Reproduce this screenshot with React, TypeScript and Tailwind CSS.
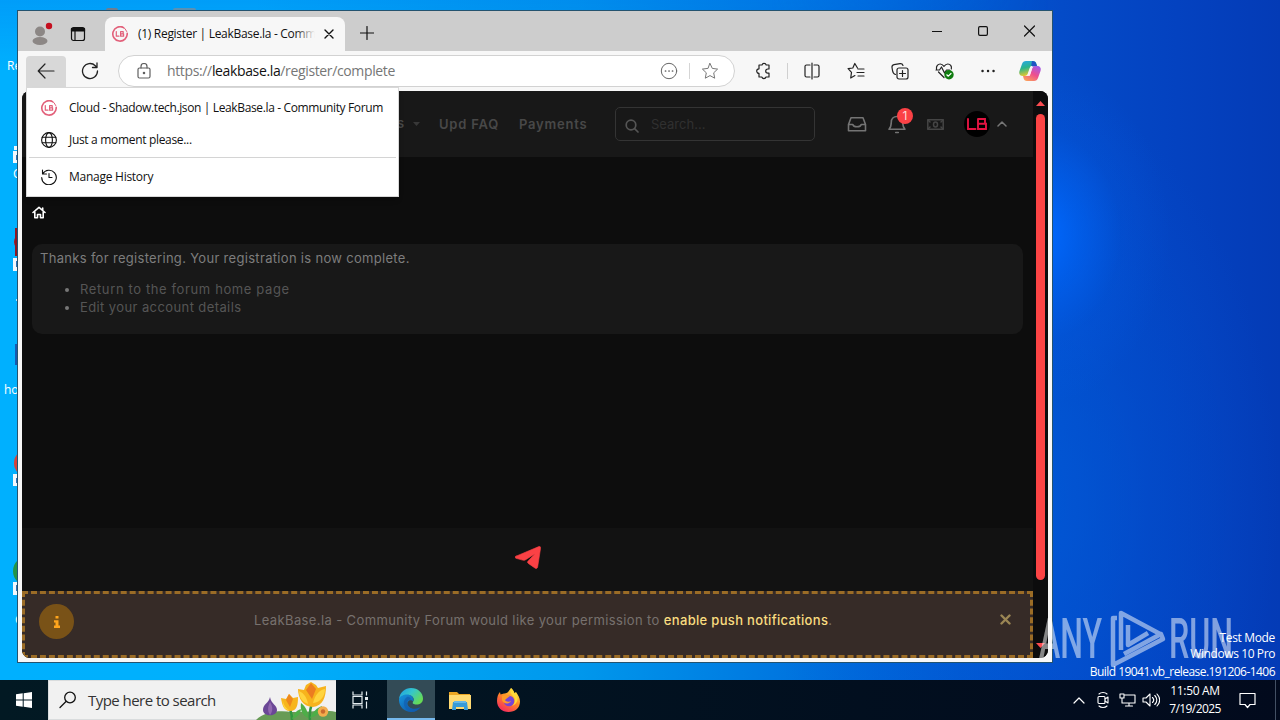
import type { ReactNode } from "react";

type DrawProps = { w: number; h: number; className?: string; sw?: number; children: ReactNode };

function Draw({ w, h, className = "", sw = 1, children }: DrawProps) {
  return (
    <svg
      width={w}
      height={h}
      viewBox={`0 0 ${w} ${h}`}
      fill="none"
      stroke="currentColor"
      strokeWidth={sw}
      strokeLinecap="round"
      strokeLinejoin="round"
      className={`block shrink-0 ${className}`}
    >
      {children}
    </svg>
  );
}

function Favicon() {
  return (
    <Draw w={16} h={16} sw={1.6} className="text-[#e2607a]">
      <path d="M11.5 1.6A7.200 7.200 0 1 0 15.200 7.400" />
      <path d="M10 .8A7.200 7.200 0 0 1 14.800 5.500" strokeWidth={1} />
      <path d="M4.300 5.500v4.700h2.700M8.600 5.700h2.600v2.100H8.600zM8.600 7.800h3v2.400h-3z" strokeWidth={1.200} />
    </Draw>
  );
}

function TitleBar() {
  return (
    <div className="flex h-10 shrink-0 bg-[#cdcdcd] text-[#111]">
      <div className="flex w-[87px] shrink-0 items-center pt-[5px] pl-3">
        <Draw w={24} h={24} className="text-[#8c8785]">
          <circle cx="10" cy="9.500" r="5" fill="currentColor" stroke="none" />
          <ellipse cx="10" cy="19" rx="7.500" ry="4" fill="currentColor" stroke="none" />
          <circle cx="19" cy="4" r="3.200" fill="#c50f1f" stroke="none" />
        </Draw>
        <Draw w={16} h={16} className="ml-4" sw={1.200}>
          <rect x="1.500" y="1.500" width="13" height="13" rx="2" />
          <path d="M1.500 2.500h13v2.500h-13z" fill="currentColor" />
          <path d="M5 5v9" />
        </Draw>
      </div>
      <div className="mt-[6px] flex w-[240px] shrink-0 items-center rounded-t-lg bg-[#f7f7f7] pl-[7px]">
        <Favicon />
        <div className="relative ml-[10px] w-[177px] overflow-hidden whitespace-nowrap text-[12px] leading-[18px] tracking-[-0.300px]">
          (1) Register | LeakBase.la - Commu
          <div className="absolute inset-y-0 right-0 w-5 bg-linear-to-r from-transparent to-[#f7f7f7]" />
        </div>
        <Draw w={10} h={10} className="ml-[9px]" sw={1.400}>
          <path d="M1 1l8 8M9 1l-8 8" />
        </Draw>
      </div>
      <Draw w={14} h={14} className="mt-[15px] ml-[15px]" sw={1.200}>
        <path d="M7 .5v13M.5 7h13" />
      </Draw>
      <div className="flex flex-1 justify-end gap-[36px] pt-[14px] pr-[17px]">
        <Draw w={10} h={12}>
          <path d="M0 6.500h10" />
        </Draw>
        <Draw w={10} h={12} sw={1.200}>
          <rect x=".6" y="1.600" width="8.800" height="8.800" rx="1.300" />
        </Draw>
        <Draw w={11} h={12} sw={1.200}>
          <path d="M.5 1l10 10M10.500 1l-10 10" />
        </Draw>
      </div>
    </div>
  );
}

function Toolbar() {
  return (
    <div className="flex h-10 shrink-0 items-center bg-[#f7f7f7] text-[#222]">
      <div className="ml-2 flex h-[31px] w-10 items-center justify-center rounded-t bg-[#d8d8d8]">
        <Draw w={18} h={16} sw={1.200}>
          <path d="M8 1L1.200 8 8 15M1.200 8H17" />
        </Draw>
      </div>
      <Draw w={18} h={18} className="ml-[15px]" sw={1.300}>
        <path d="M16.500 9A7.500 7.500 0 1 1 14.300 3.700L16 5.400M16 1v4.500h-4.500" />
      </Draw>
      <div className="ml-[19px] flex h-8 w-[617px] shrink-0 items-center rounded-full border border-[#d2d2d2] bg-white">
        <Draw w={14} h={16} className="ml-[18px] text-[#5f5f5f]" sw={1.200}>
          <rect x="1" y="5" width="12" height="10" rx="1.500" />
          <path d="M4 5V3.500a3 3 0 0 1 6 0V5" />
          <circle cx="7" cy="10" r=".7" fill="currentColor" />
        </Draw>
        <div className="ml-4 w-[493px] whitespace-nowrap text-[14px] leading-5 tracking-[-0.360px] text-[#767676]">
          https://<span className="text-[#111]">leakbase.la</span>/register/complete
        </div>
        <Draw w={18} h={18} className="text-[#666]">
          <circle cx="9" cy="9" r="7.700" />
          <path d="M5.500 9h.1M9 9h.1M12.500 9h.1" strokeWidth={1.700} />
        </Draw>
        <div className="mx-[11px] h-4 w-px shrink-0 bg-[#d5d5d5]" />
        <Draw w={18} h={18} className="text-[#777]">
          <path d="M9 1.500l2.300 4.900 5.300.7-3.900 3.700 1 5.400L9 13.600l-4.700 2.600 1-5.400-3.900-3.700 5.300-.7z" />
        </Draw>
      </div>
      <Draw w={18} h={18} className="ml-5" sw={1.200}>
        <path d="M4 3h3a2.200 2.200 0 0 1 4.200 0H14v4h-1.200a2.100 2.100 0 0 0 0 4.200H14V15h-3a2.200 2.200 0 0 1-4.200 0H4v-3.600a2.300 2.300 0 0 1 0-4.600z" />
      </Draw>
      <div className="ml-[14px] h-4 w-px bg-[#d0d0d0]" />
      <Draw w={18} h={18} className="ml-[15px]" sw={1.200}>
        <path d="M7 3H3.500A1.500 1.500 0 0 0 2 4.500v9A1.500 1.500 0 0 0 3.500 15H7M11 3h3.500A1.500 1.500 0 0 1 16 4.500v9a1.500 1.500 0 0 1-1.500 1.500H11M9 1v16" />
      </Draw>
      <Draw w={18} h={18} className="ml-[26px]" sw={1.200}>
        <path d="M10.500 6L7.800 1.500 5.800 6l-4.700.7 3.400 3.600L3.700 16l4.200-2.400M11 7h6M10 10.500h7M11 14h6" />
      </Draw>
      <Draw w={18} h={18} className="ml-[26px]" sw={1.200}>
        <path d="M4.500 12.500C2.500 12 1.800 10.500 1.500 8.500L1 5.500C.8 4 1.500 3 3 2.700l6-1c1.500-.2 2.500.3 3 1.800" />
        <rect x="6" y="6" width="11" height="11" rx="2" />
        <path d="M11.500 8.500v6M8.500 11.500h6" />
      </Draw>
      <Draw w={20} h={18} className="ml-[26px]" sw={1.200}>
        <path d="M9 15.500L3.500 10M1.500 7C1 4 3 2 5.200 2 7 2 8 3 9 4.300 10 3 11 2 12.800 2 15.200 2 17 4 16.300 7M1 8h3.500L6.500 5l3 6 2-3h3" />
        <circle cx="14" cy="12.700" r="4.700" fill="#107c10" stroke="none" />
        <path d="M11.800 12.800l1.500 1.400 2.700-2.700" stroke="#fff" />
      </Draw>
      <Draw w={16} h={6} className="ml-[25px]" sw={2.400}>
        <path d="M2.500 3h.1M8 3h.1M13.500 3h.1" />
      </Draw>
      <Draw w={23} h={20} className="ml-[23px]">
        <defs>
          <linearGradient id="cpa" x1="0" y1="0" x2=".3" y2="1">
            <stop offset="0" stopColor="#2aa6ed" />
            <stop offset=".5" stopColor="#2ab58d" />
            <stop offset="1" stopColor="#e8c72b" />
          </linearGradient>
          <linearGradient id="cpb" x1=".8" y1="0" x2=".2" y2="1">
            <stop offset="0" stopColor="#a35bea" />
            <stop offset=".5" stopColor="#ee4f8e" />
            <stop offset="1" stopColor="#fba05b" />
          </linearGradient>
        </defs>
        <path d="M7 0h7c2 0 3 1 3.500 3l.7 2H14c-2 0-3 .8-3.500 2.500L9 12c-.5 2-1.500 3-3.500 3H4c-3 0-4.500-2-3.500-5L3 3c.6-2 2-3 4-3z" fill="url(#cpa)" stroke="none" />
        <path d="M13 0c2.500 0 3.700.8 4.300 3l.8 2.500h-4c-1 0-1.500-.4-1.800-1.500z" fill="#2053c5" stroke="none" />
        <path d="M15 20H8c-2 0-3-1-3.500-3L4 15h4c2 0 3-.8 3.500-2.500L13 8c.5-2 1.500-3 3.500-3H18c3 0 4.500 2 3.500 5L19 17c-.6 2-2 3-4 3z" fill="url(#cpb)" stroke="none" />
        <path d="M12.500 6L10 14" stroke="#fbeef5" strokeWidth={2} />
      </Draw>
    </div>
  );
}

function SiteNav() {
  return (
    <div className="flex h-[66px] shrink-0 items-center bg-[#181818] text-[13px] font-semibold text-[#484848]">
      <span className="ml-[375px] w-[15px] whitespace-nowrap">s</span>
      <Draw w={9} h={5} className="text-[#383838]">
        <path d="M1 0h7L4.500 4z" fill="currentColor" stroke="none" />
      </Draw>
      <span className="mt-0.5 ml-[18px] w-[80px] whitespace-nowrap tracking-[0.800px]">Upd FAQ</span>
      <span className="mt-0.5 w-24 whitespace-nowrap tracking-[0.800px]">Payments</span>
      <div className="flex h-[34px] w-[200px] items-center rounded-[5px] border border-[#343434] font-normal text-[#303030]">
        <Draw w={14} h={14} className="mt-[3px] ml-[9px] text-[#555]" sw={1.700}>
          <circle cx="6" cy="6" r="4.800" />
          <path d="M9.600 9.600L13 13" />
        </Draw>
        <span className="mt-0.5 ml-[12px]">Search...</span>
      </div>
      <Draw w={20} h={18} className="ml-8 text-[#747474]" sw={1.600}>
        <path d="M1.500 9.500L4 2.800h12l2.500 6.700v6.200h-17zM1.500 9.500h4.300c.8 3 7.600 3 8.400 0h4.300" />
      </Draw>
      <div className="relative ml-5">
        <Draw w={20} h={20} className="text-[#747474]" sw={1.600}>
          <path d="M2 15.200h16c-1.700-1.700-2.300-2.700-2.300-7.200C15.700 5 13.500 2.500 10 2.500S4.300 5 4.300 8c0 4.500-.6 5.500-2.300 7.200zM8.700 18.500h2.600" />
        </Draw>
        <div className="absolute -top-[6px] left-[10px] flex h-4 w-4 items-center justify-center rounded-full bg-[#fb4145] text-[12px] font-normal text-[#ffdada]">
          1
        </div>
      </div>
      <Draw w={17} h={11} className="ml-5 text-[#454545]" sw={1.500}>
        <rect x=".8" y=".8" width="15.400" height="9.400" />
        <ellipse cx="8.500" cy="5.500" rx="2" ry="2.500" />
        <path d="M1 1l2 2M1 10l2-2M16 1l-2 2M16 10l-2-2" />
      </Draw>
      <div className="ml-5 flex h-[26px] w-[26px] items-center justify-center rounded-full bg-black">
        <Draw w={20} h={12} className="text-[#e31442]" sw={1.900}>
          <path d="M1 1v10h7.500M11 1h7v4.800M11 1v10h8V5.800h-8" strokeLinejoin="miter" />
        </Draw>
      </div>
      <Draw w={10} h={6} className="ml-[7px] text-[#777]" sw={1.500}>
        <path d="M1 5l4-4 4 4" />
      </Draw>
    </div>
  );
}

function Notice() {
  return (
    <div className="flex h-[67px] shrink-0 items-center border-[3px] border-dashed border-[#9b6c26] bg-[#362b27] pr-[17px] pl-[14px]">
      <div className="mb-[6px] flex h-[35px] w-[35px] shrink-0 items-center justify-center rounded-full bg-[#795217]">
        <Draw w={8} h={12} className="text-[#ffa51d]">
          <path d="M2.500 0h3v2.500h-3zM1 4.200h4.500v5.300H7V12H1V9.500h1.500v-3H1z" fill="currentColor" stroke="none" />
        </Draw>
      </div>
      <div className="mb-[9px] ml-[180px] w-[746px] shrink-0 whitespace-nowrap text-[13px] leading-5 tracking-[0.385px] text-[#77716e]">
        LeakBase.la - Community Forum would like your permission to{" "}
        <span className="font-medium tracking-[0.320px] text-[#fadd80]">enable push notifications</span>.
      </div>
      <Draw w={11} h={11} className="mb-[11px] text-[#9b8654]" sw={2.400}>
        <path d="M1.500 1.500l8 8M9.500 1.500l-8 8" />
      </Draw>
    </div>
  );
}

function Page() {
  return (
    <div className="mx-1 mb-1 flex flex-1 overflow-hidden rounded-lg bg-[#0d0d0d] font-[Inter,sans-serif]">
      <div className="flex w-[1011px] flex-col">
        <SiteNav />
        <div className="h-[371px] shrink-0 px-[10px] pt-[49px]">
          <Draw w={14} h={13} className="text-white" sw={1.600}>
            <path d="M1 6.500L7 1.300l6 5.200M2.800 6v5.800h2.700V8.500h3v3.300h2.700V6M10.700 2v2" />
          </Draw>
          <div className="mt-[25px] h-[90px] rounded-[10px] bg-[#181818] px-2 pt-[5px] text-[13px] leading-[18px] text-[#7d7d7d]">
            <p className="tracking-[0.310px]">Thanks for registering. Your registration is now complete.</p>
            <ul className="mt-[13px] list-disc pl-10 text-[#555] marker:text-[#777]">
              <li className="tracking-[0.620px]">Return to the forum home page</li>
              <li className="tracking-[0.400px]">Edit your account details</li>
            </ul>
          </div>
        </div>
        <div className="flex h-[63px] shrink-0 justify-center bg-[#121212] pt-[18px]">
          <Draw w={26} h={23} className="text-[#fb4145]">
            <path d="M1 10.200L23.800.6c1.200-.4 2 .3 1.800 1.500l-2.900 18.600c-.3 1.800-1.500 2.200-2.900 1.200l-6.500-4.500c-1-.7-1-1.500-.2-2.300l7-7.400-9.400 6c-1 .7-2 .8-3.200.4L1 12.300c-1.200-.5-1.200-1.500 0-2.100z" fill="currentColor" stroke="currentColor" strokeWidth=".6" />
          </Draw>
        </div>
        <Notice />
      </div>
      <div className="flex flex-1 flex-col items-center bg-[#0c0c0d] pt-[10px] pr-px text-[#fb4b50]">
        <Draw w={9} h={5}>
          <path d="M0 5l4.500-5L9 5z" fill="currentColor" stroke="none" />
        </Draw>
        <div className="mt-2 h-[466px] w-[9px] rounded-full bg-[#fc4445]" />
        <Draw w={9} h={5} className="mt-[63px]">
          <path d="M0 0h9L4.500 5z" fill="currentColor" stroke="none" />
        </Draw>
      </div>
    </div>
  );
}

function HistoryMenu() {
  return (
    <div className="absolute top-[76px] left-2 flex h-[110px] w-[373px] flex-col border border-[#d8d8d8] bg-white pt-1 text-[12px] text-[#111] shadow-md">
      <div className="flex h-8 items-center pl-[14px]">
        <Favicon />
        <span className="ml-3 whitespace-nowrap tracking-[-0.365px]">Cloud - Shadow.tech.json | LeakBase.la - Community Forum</span>
      </div>
      <div className="flex h-8 items-center pl-[14px]">
        <Draw w={16} h={16} sw={1.100}>
          <circle cx="8" cy="8" r="7.400" />
          <ellipse cx="8" cy="8" rx="3.400" ry="7.400" />
          <path d="M1.200 5.200h13.600M1.200 10.800h13.600" />
        </Draw>
        <span className="ml-3 tracking-[-0.320px]">Just a moment please...</span>
      </div>
      <div className="mt-px mx-0.5 h-px shrink-0 bg-[#d4d4d4]" />
      <div className="mt-[3px] flex h-8 items-center pl-[14px]">
        <Draw w={16} h={16} sw={1.100}>
          <path d="M1.500 1v4h4M1.700 4.800A7.300 7.300 0 1 1 .7 8.500M8 4.500V8.500h3" />
        </Draw>
        <span className="ml-3 tracking-[-0.260px]">Manage History</span>
      </div>
    </div>
  );
}

function BrowserWindow() {
  return (
    <div className="absolute top-[10px] left-[17px] flex h-[653px] w-[1036px] flex-col border border-[#24536f] bg-[#f7f7f7]">
      <TitleBar />
      <Toolbar />
      <Page />
      <HistoryMenu />
    </div>
  );
}

function DesktopIcons() {
  return (
    <div className="text-[12px] leading-4 text-white">
      <span className="absolute top-[58px] left-[7px]">Re</span>
      <span className="absolute top-[166px] left-[13px]">C</span>
      <span className="absolute top-[382px] left-1">ho</span>
      <span className="absolute top-[612px] left-[15px]">G</span>
      <svg width="18" height="600" className="absolute top-0 left-0">
        <circle cx="22" cy="242" r="8" fill="#a51822" />
        <path d="M15 228h3v28h-3z" fill="#8d1722" />
        <circle cx="28" cy="463" r="14" fill="#d84037" />
        <circle cx="28" cy="571" r="15" fill="#239447" />
        <path d="M15 344h3v21h-3z" fill="#1759b0" />
        <path d="M16.500 299v2" stroke="#b7e4ff" />
        <path d="M14 146h4v4h-4zM13 151h5v12h-5zM13 258h5v13h-5zM13 474h5v12h-5zM13 582h5v13h-5z" fill="#f3f8fc" />
        <path d="M16 155h2v5h-2zM16 261h2v6h-2zM16 478h2v5h-2zM16 585h2v6h-2z" fill="#2d72b9" />
      </svg>
      <div className="absolute top-[8px] left-[106px] h-[2px] w-[12px] rounded-t bg-[#6d7e91]" />
      <div className="absolute top-[8px] left-[173px] h-[2px] w-[23px] rounded-t bg-[#5b91b4]" />
    </div>
  );
}

function Watermark() {
  return (
    <svg
      width="200"
      height="66"
      className="absolute top-[606px] left-[1038px] font-[Roboto,sans-serif] font-medium"
      fill="white"
      opacity=".5"
    >
      <text x="1" y="52" fontSize="55" textLength="63" lengthAdjust="spacingAndGlyphs">ANY</text>
      <text x="131" y="52" fontSize="55" textLength="64" lengthAdjust="spacingAndGlyphs">RUN</text>
      <g fill="none" stroke="white" strokeWidth="4.500" strokeLinejoin="round">
        <path d="M83 44V7l41 22M90 19v20l20-12M79 12h-4v47l50-26-2-5-37 20" />
      </g>
    </svg>
  );
}

function Tulips() {
  return (
    <svg width="80" height="40" viewBox="0 0 80 40" className="block shrink-0">
      <path d="M0 40c8-8 22-10 36-8 16 1 28-3 44 0v8z" fill="#679b55" />
      <path d="M36 40c0-6-1-8-2-11M54 40c-1-7 0-11 2-17" stroke="#319640" strokeWidth="2.500" fill="none" />
      <path d="M36 39c2-6 5-9 9-10 0 4-3 8-9 10zM54 38c3-7 7-10 12-12-1 7-5 10-12 12zM52 38c0-7-2-11-7-15-1 7 1 12 7 15z" fill="#4dae48" />
      <path d="M14 17c1 7 7 8 7 13 0 7-14 7-14 0 0-6 6-7 7-13z" fill="#6b4796" />
      <path d="M14 22c-3 6-2 10 0 13 3-4 3-8 0-13z" fill="#9168b0" />
      <path d="M25 18l5 1 3-5 4 4 5-1c0 8-1 14-8 14-6 0-8-6-9-13z" fill="#f7b51d" />
      <path d="M30 20l3-6 4 5-3 8z" fill="#ee871d" />
      <path d="M27 20c0 5 3 8 6 10-5 0-7-5-6-10z" fill="#ffd53d" />
      <path d="M42 9l6 1 2-5 5-3 5 3 2 3 8-2c0 11-3 20-13 21-10 0-15-9-15-18z" fill="#f7b31c" />
      <path d="M50 10l5-7 5 6-4 10z" fill="#ec7c20" />
      <path d="M43 11c5 2 8 7 9 13-6-2-9-7-9-13zM69 9c-6 1-10 6-12 14 8-1 12-7 12-14z" fill="#ffd43e" />
      <circle cx="67" cy="31.500" r="5.200" fill="#f3ad4d" />
      <circle cx="67" cy="31.500" r="2.200" fill="#ca6a2d" />
    </svg>
  );
}

function EdgeLogo() {
  return (
    <svg width="24" height="24" viewBox="0 0 24 24" className="block">
      <defs>
        <linearGradient id="ega" x1="0" x2="1" y1="0" y2=".6">
          <stop offset="0" stopColor="#1b9ce8" />
          <stop offset=".5" stopColor="#35c6cb" />
          <stop offset="1" stopColor="#66db55" />
        </linearGradient>
        <linearGradient id="egb" x1="0" x2="1" y1="0" y2="1">
          <stop offset="0" stopColor="#1695df" />
          <stop offset="1" stopColor="#0e4b9c" />
        </linearGradient>
      </defs>
      <path d="M0 11C1 4 6 0 12 0c7 0 12 5 12 10.500 0 4-3 6-6.500 6-3 0-4.500-1-3.500-2.500 2-3 0-7-5-7-4 0-7.500 1.500-9 4z" fill="url(#ega)" />
      <path d="M0 11c1-3 4.500-4.600 8-4.600 5 0 7.500 3.600 6 7.200-1-1.500-4-2-5.200.4-1.500 3.200 2 7.300 7 6.800 2.500-.2 4.200-1 6-2.300C20 22 16.500 24 12 24 5 24-.5 18 0 11z" fill="url(#egb)" />
      <path d="M8 9c-3 2-4 6-2.500 9.500 1 2.500 3.500 4.800 6.500 5.400 4 .2 7-1.400 9-4.200-7 3.300-13.500-.7-13-5 .2-2.200 2-3.700 4-3.200C11.300 9.500 10 8.500 8 9z" fill="#135eaf" opacity=".7" />
    </svg>
  );
}

function FirefoxLogo() {
  return (
    <svg width="23" height="24" viewBox="0 0 23 24" className="block">
      <defs>
        <linearGradient id="ffa" x1=".8" x2=".2" y1="0" y2="1">
          <stop offset="0" stopColor="#fff14a" />
          <stop offset=".45" stopColor="#ff8b24" />
          <stop offset="1" stopColor="#f52263" />
        </linearGradient>
      </defs>
      <path d="M14 0c2 2 3 3 3.400 5l1.600-1c2 3 4 6 4 9.500C23 20 18 24 11.500 24S0 19.500 0 13C0 9 1 6 3 4l.5 2.500L7 5.500c3-.2 4-1 7-5.500z" fill="url(#ffa)" />
      <circle cx="12" cy="13" r="5.300" fill="#7644d7" />
      <path d="M5 8c3-2 6-1 8 1-3 0-3 2-5 3 1 2 4 2 6 1-2 4-8 3-9-1z" fill="#ff9b26" />
      <path d="M14 0c-1 4 0 6 2 8 3 3 2 8-1 10 6-2 7-8 4-13l-1.600 1C17 4 16 2 14 0z" fill="#ffd938" />
    </svg>
  );
}

function Taskbar() {
  return (
    <div className="flex h-10 shrink-0 bg-linear-to-r from-[#021923] to-[#020a1d] text-white">
      <div className="flex w-12 items-center justify-center">
        <Draw w={16} h={16}>
          <path d="M0 2.300L6.700 1.300v6.200H0zM7.700 1.200L16 0v7.500H7.700zM0 8.500h6.700v6.200L0 13.700zM7.700 8.500H16V16l-8.300-1.200z" fill="currentColor" stroke="none" />
        </Draw>
      </div>
      <div className="flex w-72 shrink-0 items-center border border-r-0 border-[#d9dcdd] bg-[#f1f1f1] text-[#333]">
        <Draw w={18} h={18} className="ml-[10px] text-[#111]" sw={1.300}>
          <circle cx="11" cy="6.500" r="5.300" />
          <path d="M7 10.500L1 16.500" />
        </Draw>
        <span className="ml-[11px] w-[168px] whitespace-nowrap text-[15px] tracking-[-0.540px]">Type here to search</span>
        <Tulips />
      </div>
      <div className="flex w-[51px] items-center justify-center pr-[4px]">
        <Draw w={18} h={18} sw={1.200} className="text-[#e6eef1]">
          <path d="M2 1v3h9V1M2 17v-3h9v3M2 5.500h9v7H2zM15.500 1v3M15.500 11v6" strokeLinecap="square" strokeLinejoin="miter" />
          <path d="M14 6h3v3h-3z" fill="currentColor" stroke="none" />
        </Draw>
      </div>
      <div className="flex w-12 items-center justify-center border-b-2 border-[#76b9ed] bg-[#334b56] pt-0.5">
        <EdgeLogo />
      </div>
      <div className="flex w-[49px] items-center justify-center">
        <svg width="22" height="19" viewBox="0 0 22 19" className="block">
          <path d="M0 1h8l2 2h11v15H0z" fill="#eba624" />
          <path d="M0 4h22v14H0z" fill="#ffda72" />
          <path d="M4 11h14l1 8h-4v-3H7v3H3z" fill="#389bd8" />
          <path d="M5 10h12v2H5z" fill="#67b8e7" />
        </svg>
      </div>
      <div className="flex w-[49px] items-center justify-center">
        <FirefoxLogo />
      </div>
      <div className="flex flex-1 items-center justify-end text-[12px]">
        <Draw w={12} h={7} sw={1.200}>
          <path d="M1 6l5-5 5 5" />
        </Draw>
        <Draw w={12} h={18} className="ml-3" sw={1.100}>
          <path d="M2 3c2-2 6-2 8 0M2 15c2 2 6 2 8 0" />
          <rect x="1" y="5.500" width="7" height="7" rx="1" />
          <path d="M8 8l3-2v6l-3-2" />
        </Draw>
        <Draw w={17} h={16} className="ml-[10px]" sw={1.100}>
          <path d="M6 3h10v8H5M10 11v3M6.500 14h7M1 2h4v4H1zM3 6v5h3" />
        </Draw>
        <Draw w={18} h={16} className="ml-[6px]" sw={1.100}>
          <path d="M1 6h3l4-4v12l-4-4H1zM10.500 5.500c1.500 1.500 1.500 3.500 0 5M12.800 3.500c2.700 2.700 2.700 6.300 0 9M15 2c3.300 3.700 3.300 8.300 0 12" />
        </Draw>
        <div className="ml-[6px] w-[58px] text-center leading-[18px] whitespace-nowrap">
          <div className="tracking-[-0.350px]">11:50 AM</div>
          <div className="tracking-[-0.580px]">7/19/2025</div>
        </div>
        <Draw w={17} h={17} className="ml-[15px]" sw={1.200}>
          <path d="M1 1.500h15v11h-5l-2.500 3-2.500-3H1z" />
        </Draw>
        <div className="ml-[19px] h-full w-px bg-[#435064]" />
        <div className="w-1" />
      </div>
    </div>
  );
}

export default function App() {
  return (
    <div className="relative flex h-[720px] w-[1280px] flex-col overflow-hidden font-['Open_Sans','Noto_Sans',sans-serif]">
      <div className="relative h-[680px] shrink-0 bg-[radial-gradient(ellipse_130px_170px_at_1040px_235px,#0069ff_0%,#0066fa99_30%,#0060f02e_62%,#0060f000_100%),radial-gradient(ellipse_260px_420px_at_1020px_500px,#005ad8cc_0%,#0058d84d_50%,#0058d800_100%),linear-gradient(90deg,#00b0fe_0%,#00b0fc_20%,#0098ec_45%,#0068da_68%,#044bc8_83%,#0442c0_92%,#043bb6_100%)]">
        <div className="h-full bg-linear-to-b from-[#0078f055] via-transparent via-10% to-transparent [mask-image:linear-gradient(90deg,#000_0%,#000_60%,transparent_82%)]" />
        <DesktopIcons />
        <BrowserWindow />
        <Watermark />
        <div className="absolute top-[630px] right-[5px] text-right text-[12px] leading-4 whitespace-nowrap text-white">
          <div className="tracking-[-0.350px]">Test Mode</div>
          <div className="tracking-[-0.400px]">Windows 10 Pro</div>
          <div className="mt-0.5 tracking-[-0.550px]">Build 19041.vb_release.191206-1406</div>
        </div>
      </div>
      <Taskbar />
    </div>
  );
}
